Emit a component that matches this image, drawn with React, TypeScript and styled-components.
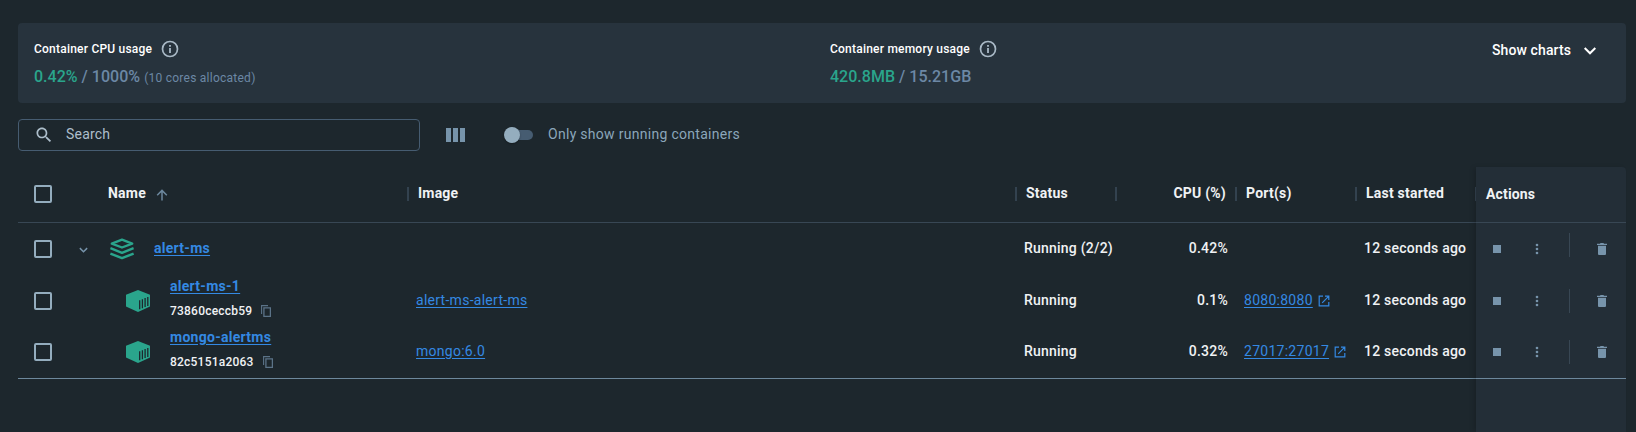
import React from "react";
import styled, { createGlobalStyle } from "styled-components";

const Global = createGlobalStyle`
  html, body { margin: 0; padding: 0; background: #1d272d; }
  body { font-family: Roboto, sans-serif; font-size: 14px; color: #f0f2f4; overflow: hidden; }
  *, *::before, *::after { box-sizing: border-box; }
`;

const Page = styled.main`
  display: flex;
  flex-direction: column;
  height: 432px;
  padding: 23px 10px 0 18px;
  background: #1d272d;
`;

const UsageCard = styled.section`
  display: flex;
  height: 80px;
  flex: none;
  padding: 16px 28px 0 16px;
  background: #27333d;
  border-radius: 4px;
`;

const Metric = styled.div<{ $width?: number }>`
  display: flex;
  flex-direction: column;
  ${(p) => (p.$width ? `width: ${p.$width}px;` : "flex: 1;")}
`;

const MetricTitle = styled.div`
  display: flex;
  align-items: center;
  gap: 9px;
  height: 20px;
  font-size: 12px;
  font-weight: 500;
  color: #fff;
  letter-spacing: 0.22px;
`;

const MetricValue = styled.div`
  display: flex;
  align-items: baseline;
  height: 24px;
  margin-top: 6px;
  line-height: 24px;
  font-size: 16px;
  font-weight: 500;
  letter-spacing: 0.02px;
  white-space: pre;
  color: #6c88a5;
`;

const Used = styled.span`
  color: #2aa58c;
`;

const Note = styled.span`
  font-size: 12px;
  font-weight: 400;
  letter-spacing: 0.25px;
`;

const ChartsButton = styled.div`
  display: flex;
  align-items: center;
  gap: 11px;
  height: 22px;
  font-weight: 500;
  color: #fff;
  letter-spacing: 0.1px;
`;

const Toolbar = styled.div`
  display: flex;
  align-items: center;
  flex: none;
  height: 32px;
  margin-top: 16px;
`;

const SearchBox = styled.div`
  display: flex;
  align-items: center;
  gap: 12px;
  width: 402px;
  height: 32px;
  padding: 0 0 2px 15px;
  border: 1px solid #465c71;
  border-radius: 4px;
  color: #adbecb;
  letter-spacing: 0.2px;
  svg { margin-top: 2px; }
`;

const ColumnsButton = styled.div`
  display: flex;
  gap: 2px;
  margin-left: 26px;
`;

const ColumnBar = styled.i`
  width: 5px;
  height: 14px;
  background: #7794ab;
`;

const Switch = styled.div`
  display: flex;
  align-items: center;
  width: 29px;
  height: 16px;
  margin-left: 39px;
`;

const Knob = styled.i`
  flex: none;
  width: 16px;
  height: 16px;
  border-radius: 50%;
  background: #94adbe;
  box-shadow: 0 1px 2px rgba(0, 0, 0, 0.3);
  z-index: 1;
`;

const Track = styled.i`
  width: 21px;
  height: 10px;
  margin-left: -8px;
  border-radius: 5px;
  background: #465c71;
`;

const SwitchLabel = styled.span`
  margin-left: 15px;
  padding-bottom: 2px;
  color: #8ba6ba;
  letter-spacing: 0.29px;
`;

const Table = styled.div`
  display: flex;
  flex: 1;
  margin-top: 16px;
`;

const Columns = styled.div`
  width: 1458px;
`;

const ActionsColumn = styled.div`
  width: 150px;
  background: #232e37;
  border-top-right-radius: 4px;
  box-shadow: -3px 0 5px -1px rgba(0, 0, 0, 0.16);
`;

const grid = `
  display: grid;
  grid-template-columns: 90px 300px 608px 100px 120px 120px 120px;
`;

const HeaderRow = styled.div`
  ${grid}
  height: 56px;
  border-bottom: 1px solid #384754;
`;

const HeaderCell = styled.div<{ $right?: boolean; $first?: boolean }>`
  display: flex;
  align-items: center;
  gap: 10px;
  justify-content: ${(p) => (p.$right ? "flex-end" : "flex-start")};
  height: 14px;
  margin: 20px -1px 0 ${(p) => (p.$first ? 0 : 1)}px;
  padding: 0 9px 2px ${(p) => (p.$first ? 0 : 9)}px;
  font-weight: 700;
  letter-spacing: 0.22px;
  border-right: 2px solid #33424f;
  svg { margin-top: 3px; }
`;

const ActionsHeader = styled.div`
  height: 56px;
  padding-left: 10px;
  line-height: 54px;
  font-weight: 700;
  letter-spacing: 0.15px;
  border-bottom: 1px solid #384754;
`;

const Row = styled.div<{ $last?: boolean }>`
  ${grid}
  height: 52px;
  align-items: center;
  ${(p) => p.$last && "padding-bottom: 1px; border-bottom: 1px solid #6d889c;"}
`;

const Leading = styled.div<{ $header?: boolean }>`
  display: flex;
  align-items: center;
  padding-left: 16px;
  padding-bottom: ${(p) => (p.$header ? 1 : 0)}px;
  gap: 26px;
`;

const Checkbox = styled.i`
  width: 18px;
  height: 18px;
  border: 2px solid #94adbe;
  border-radius: 2px;
`;

const NameCell = styled.div<{ $child?: boolean }>`
  display: flex;
  align-items: center;
  gap: 20px;
  padding-left: ${(p) => (p.$child ? 18 : 2)}px;
`;

const NameStack = styled.div<{ $child?: boolean }>`
  display: flex;
  flex-direction: column;
  gap: 5px;
  margin-top: ${(p) => (p.$child ? -6 : -2)}px;
`;

const Link = styled.a<{ $bold?: boolean }>`
  color: #3489e3;
  font-weight: ${(p) => (p.$bold ? 700 : 400)};
  line-height: 20px;
  letter-spacing: ${(p) => (p.$bold ? 0.28 : 0.27)}px;
  text-decoration: underline;
  text-underline-offset: 2px;
`;

const ContainerId = styled.div`
  display: flex;
  align-items: center;
  gap: 9px;
  height: 20px;
  font-size: 12px;
  font-weight: 500;
  letter-spacing: 0.22px;
`;

const Cell = styled.div<{ $right?: boolean }>`
  display: flex;
  align-items: center;
  gap: 5px;
  padding: 0 8px 2px 8px;
  justify-content: ${(p) => (p.$right ? "flex-end" : "flex-start")};
  font-weight: 500;
  letter-spacing: 0.22px;
  white-space: nowrap;
  svg { margin-top: 2px; }
`;

const ActionRow = styled.div<{ $last?: boolean }>`
  display: flex;
  align-items: center;
  height: 52px;
  padding-left: 17px;
  ${(p) => p.$last && "padding-bottom: 1px; border-bottom: 1px solid #6d889c;"}
`;

const StopSquare = styled.i`
  width: 8px;
  height: 8px;
  margin-right: 28px;
  background: #7794ab;
`;

const Divider = styled.i<{ $raised?: boolean }>`
  width: 1px;
  height: 24px;
  margin: 0 27px 0 24px;
  background: #384754;
  ${(p) => p.$raised && "align-self: flex-start; margin-top: 10px;"}
`;

const InfoIcon = () => (
  <svg width="18" height="18" viewBox="0 0 18 18" fill="none" stroke="#a9b9c6">
    <circle cx="9" cy="9" r="7.5" strokeWidth="1.7" />
    <path d="M9 8v5M9 5v1.7" strokeWidth="1.8" />
  </svg>
);

const SearchIcon = () => (
  <svg width="20" height="20" viewBox="0 0 24 24" fill="#adbecb">
    <path d="M15.5 14h-.79l-.28-.27C15.41 12.59 16 11.11 16 9.5 16 5.91 13.09 3 9.5 3S3 5.91 3 9.5 5.91 16 9.5 16c1.61 0 3.09-.59 4.23-1.57l.27.28v.79l5 4.99L20.49 19l-4.99-5zm-6 0C7.01 14 5 11.99 5 9.5S7.01 5 9.5 5 14 7.01 14 9.5 11.99 14 9.5 14z" />
  </svg>
);

const ChevronIcon = ({ size, color, weight }: { size: number; color: string; weight: number }) => (
  <svg width={size} height={size} viewBox="0 0 16 16" fill="none" stroke={color} strokeWidth={weight}>
    <path d="M2.7 6 8 11.3 13.3 6" />
  </svg>
);

const ArrowUpIcon = () => (
  <svg width="12" height="12" viewBox="0 0 12 12" fill="none" stroke="#6c879d" strokeWidth="1.5">
    <path d="M6 11.5V1.5M1.2 6.2 6 1.4l4.8 4.8" />
  </svg>
);

const MoreIcon = () => (
  <svg width="16" height="16" viewBox="0 0 24 24" fill="#7794ab">
    <circle cx="12" cy="6" r="2" />
    <circle cx="12" cy="12" r="2" />
    <circle cx="12" cy="18" r="2" />
  </svg>
);

const StackIcon = () => (
  <svg width="24" height="22" viewBox="0 0 24 22" fill="none" stroke="#2aa58c" strokeWidth="2.4" strokeLinejoin="round">
    <path d="M1.800 5.600 12 1.700l10.200 3.900L12 9.500z" />
    <path d="M.4 10.200 12 14.800l11.600-4.600M.4 15.500 12 20.100l11.600-4.600" />
  </svg>
);

const ContainerIcon = () => (
  <svg width="24" height="22" viewBox="0 0 24 22">
    <path d="M12 0 24 4.8v11.7L12 22 0 16.5V4.8z" fill="#2aa58c" />
    <path d="M13.7 10.3v9M16.4 9.2v9M19.1 8.1v9M21.8 7v9" stroke="#1d272d" strokeWidth="1.3" />
  </svg>
);

const CopyIcon = () => (
  <svg width="10" height="12" viewBox="0 0 10 12" fill="none" stroke="#5b7388">
    <path d="M.6 9V.6H7" strokeWidth="1.1" />
    <path d="M2.900 2.800h6.500v8.500H2.900z" strokeWidth="1.300" />
  </svg>
);

const ExternalIcon = () => (
  <svg width="12" height="12" viewBox="0 0 12 12" fill="none" stroke="#3489e3" strokeWidth="1.2">
    <path d="M5 1.2H1.2v9.6h9.6V7M7 1.2h3.8V5M10.8 1.2 4.2 7.8" />
  </svg>
);

const TrashIcon = () => (
  <svg width="10" height="12" viewBox="0 0 10 12" fill="#7794ab">
    <path d="M3.5 0h3l.5.7h3V2H0V.7h3zM1 2.7h8V11q0 1-1 1H2q-1 0-1-1z" />
  </svg>
);

interface Container {
  name: string;
  id?: string;
  image?: string;
  status: string;
  cpu: string;
  port?: string;
}

const rows: Container[] = [
  { name: "alert-ms", status: "Running (2/2)", cpu: "0.42%" },
  { name: "alert-ms-1", id: "73860ceccb59", image: "alert-ms-alert-ms", status: "Running", cpu: "0.1%", port: "8080:8080" },
  { name: "mongo-alertms", id: "82c5151a2063", image: "mongo:6.0", status: "Running", cpu: "0.32%", port: "27017:27017" },
];

export default function App() {
  return (
    <Page>
      <Global />
      <UsageCard>
        <Metric $width={796}>
          <MetricTitle>Container CPU usage <InfoIcon /></MetricTitle>
          <MetricValue><Used>0.42%</Used> / 1000% <Note>(10 cores allocated)</Note></MetricValue>
        </Metric>
        <Metric>
          <MetricTitle>Container memory usage <InfoIcon /></MetricTitle>
          <MetricValue><Used>420.8MB</Used> / 15.21GB</MetricValue>
        </Metric>
        <ChartsButton>Show charts <ChevronIcon size={16} color="#fff" weight={2} /></ChartsButton>
      </UsageCard>
      <Toolbar>
        <SearchBox><SearchIcon />Search</SearchBox>
        <ColumnsButton><ColumnBar /><ColumnBar /><ColumnBar /></ColumnsButton>
        <Switch><Knob /><Track /></Switch>
        <SwitchLabel>Only show running containers</SwitchLabel>
      </Toolbar>
      <Table>
        <Columns>
          <HeaderRow>
            <Leading $header><Checkbox /></Leading>
            <HeaderCell $first>Name <ArrowUpIcon /></HeaderCell>
            <HeaderCell>Image</HeaderCell>
            <HeaderCell>Status</HeaderCell>
            <HeaderCell $right>CPU (%)</HeaderCell>
            <HeaderCell>Port(s)</HeaderCell>
            <HeaderCell>Last started</HeaderCell>
          </HeaderRow>
          {rows.map((r, i) => (
            <Row key={r.name} $last={i === rows.length - 1}>
              <Leading><Checkbox />{!r.id && <ChevronIcon size={11} color="#7794ab" weight={2.1} />}</Leading>
              <NameCell $child={!!r.id}>
                {r.id ? <ContainerIcon /> : <StackIcon />}
                <NameStack $child={!!r.id}>
                  <Link $bold>{r.name}</Link>
                  {r.id && <ContainerId>{r.id}<CopyIcon /></ContainerId>}
                </NameStack>
              </NameCell>
              <Cell>{r.image && <Link>{r.image}</Link>}</Cell>
              <Cell>{r.status}</Cell>
              <Cell $right>{r.cpu}</Cell>
              <Cell>{r.port && <><Link>{r.port}</Link><ExternalIcon /></>}</Cell>
              <Cell>12 seconds ago</Cell>
            </Row>
          ))}
        </Columns>
        <ActionsColumn>
          <ActionsHeader>Actions</ActionsHeader>
          {rows.map((r, i) => (
            <ActionRow key={r.name} $last={i === rows.length - 1}>
              <StopSquare />
              <MoreIcon />
              <Divider $raised={!r.id} />
              <TrashIcon />
            </ActionRow>
          ))}
        </ActionsColumn>
      </Table>
    </Page>
  );
}
